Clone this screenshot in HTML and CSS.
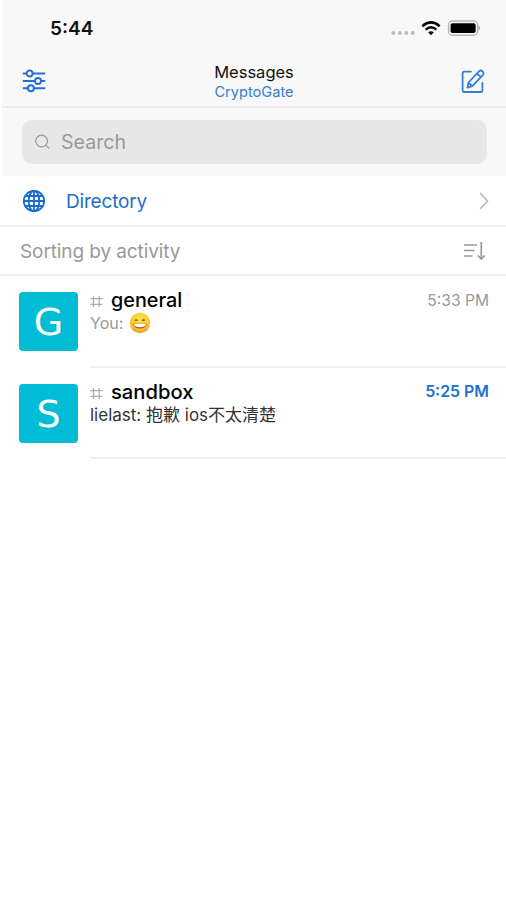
FILE: index.html
```html
<!DOCTYPE html>
<html lang="en">
<head>
<meta charset="utf-8">
<title>Messages</title>
<link rel="stylesheet" href="styles.css">
</head>
<body>
<header class="top">
  <div class="status">
    <span class="clock">5:44</span>
    <svg class="signal" width="92" height="18" viewBox="0 0 92 18">
      <g fill="#bdbdbd"><circle cx="5.3" cy="13" r="2"/><circle cx="11.8" cy="13" r="2"/><circle cx="18.3" cy="13" r="2"/><circle cx="24.8" cy="13" r="2"/></g>
      <g fill="none" stroke="#050505" stroke-width="2.5"><path d="M34.3 6.2Q43 -1.5 51.7 6.2"/><path d="M37.6 9.6Q43 5 48.4 9.6"/></g>
      <path d="M40.2 12.3Q43 10 45.8 12.3L43 15.2Z" fill="#050505"/>
      <rect x="60.6" y="1" width="29" height="14.2" rx="4" fill="#f8f8f8" stroke="#b5b5b5" stroke-width="1.4"/>
      <rect x="62.6" y="3.2" width="25" height="9.8" rx="1.8" fill="#000"/>
      <path d="M90.7 5.5Q92.6 8 90.7 10.7Z" fill="#777"/>
    </svg>
  </div>
  <nav class="nav">
    <svg class="icon" width="24" height="24" viewBox="0 0 24 24" fill="none" stroke="#236fd6" stroke-width="1.9">
      <path d="M.8 4.5H4.3M10.9 4.5H23.2M.8 12H12.7M19.3 12H23.2M.8 19.3H5.6M12.2 19.3H23.2"/>
      <circle cx="7.6" cy="4.5" r="3"/><circle cx="16" cy="12" r="3"/><circle cx="8.9" cy="19.3" r="3"/>
    </svg>
    <div class="heading"><span class="title">Messages</span><span class="server">CryptoGate</span></div>
    <svg class="icon" width="24" height="24" viewBox="0 0 24 24" fill="none" stroke="#367fd8" stroke-width="1.8" stroke-linejoin="round" stroke-linecap="round">
      <path d="M10 2.6H3.2Q1.6 2.6 1.6 4.2V21.4Q1.6 23 3.2 23H19.8Q21.4 23 21.4 21.4V14"/>
      <path d="M17.6 2.7Q19.5.6 21.5 2.3Q23.5 4.2 21.8 6.1L11.3 17.2L6.5 18.7L7.5 13.5ZM16 4.5L20 8.1M7.8 13.8L11 16.9"/>
    </svg>
  </nav>
</header>
<div class="searchbar"><div class="field">
  <svg width="16" height="16" viewBox="0 0 16 16" fill="none" stroke="#999" stroke-width="1.2"><circle cx="6.6" cy="7" r="5.8"/><path d="M10.7 11.2L14.3 14.4"/></svg>
  <span class="placeholder">Search</span>
</div></div>
<main>
  <div class="row directory">
    <svg width="24" height="24" viewBox="0 0 24 24" fill="none" stroke="#176bd1" stroke-width="1.8"><circle cx="12" cy="12" r="10.2"/><ellipse cx="12" cy="12" rx="5.3" ry="10.2"/><path d="M12 1.8V22.2M3.3 7H20.7M3.3 17H20.7M1.8 12H22.2"/></svg>
    <span class="directory-label">Directory</span>
    <svg class="end" width="12" height="20" viewBox="0 0 12 20" fill="none" stroke="#b7b7b7" stroke-width="1.5"><path d="M2 2L9.6 10L2 18"/></svg>
  </div>
  <div class="row sort">
    <span class="sort-label">Sorting by activity</span>
    <svg class="end" width="24" height="22" viewBox="0 0 24 22" fill="none" stroke="#999" stroke-width="1.7"><path d="M1 5H14M1 10.5H11.5M1 16H9.5M18.3 2V19M14.8 15.5L18.3 19L21.8 15.5"/></svg>
  </div>
  <article class="room">
    <div class="avatar">G</div>
    <div class="body">
      <div class="line"><svg class="hash" width="13" height="13" viewBox="0 0 13 13" fill="none" stroke="#aaa" stroke-width="1.2"><path d="M3.5 1V12M9.2 1V12M.5 3.7H12.5M.5 9.3H12.5"/></svg><span class="name general">general</span><time>5:33 PM</time></div>
      <div class="message muted"><span class="you">You:</span>
        <svg class="emoji" width="22" height="22" viewBox="0 0 22 22"><defs><radialGradient id="face" cx=".5" cy=".35" r=".65"><stop offset="0" stop-color="#ffe348"/><stop offset=".7" stop-color="#fbc52e"/><stop offset="1" stop-color="#e79a22"/></radialGradient></defs><circle cx="11" cy="11" r="10.2" fill="url(#face)"/><path d="M6 8.7Q7.2 7 8.4 8.7M13.2 8.7Q14.4 7 15.6 8.7" fill="none" stroke="#77430c" stroke-width="1.4"/><path d="M4.2 11.8H17.8Q17.2 16.6 11 16.6T4.2 11.8Z" fill="#a55c1b"/><path d="M4.8 12H17.2Q16.5 15.2 11 15.2T4.8 12Z" fill="#fff"/></svg>
      </div>
    </div>
  </article>
  <article class="room">
    <div class="avatar">S</div>
    <div class="body">
      <div class="line"><svg class="hash" width="13" height="13" viewBox="0 0 13 13" fill="none" stroke="#aaa" stroke-width="1.2"><path d="M3.5 1V12M9.2 1V12M.5 3.7H12.5M.5 9.3H12.5"/></svg><span class="name sandbox">sandbox</span><time class="unread">5:25 PM</time></div>
      <div class="message preview">lielast: 抱歉 ios不太清楚</div>
    </div>
  </article>
</main>
</body>
</html>
```
FILE: styles.css
```css
* { box-sizing: border-box; }
body { margin: 0; width: 506px; height: 900px; overflow: hidden; background: #fff; font-family: Inter, "Noto Sans CJK SC", sans-serif; color: #111; }
svg { display: block; flex: none; }
.top { height: 108px; margin-left: 2px; background: #f8f8f8; border-bottom: 2px solid #ededed; }
.status { height: 56px; display: flex; justify-content: space-between; padding: 17px 26px 0 48px; }
.clock { font-size: 19px; line-height: 23px; font-weight: 600; }
.signal { margin-top: 2.5px; }
.nav { height: 50px; display: grid; grid-template-columns: 24px 1fr 24px; padding: 0 21px 0 20px; align-items: center; }
.heading { display: flex; flex-direction: column; align-items: center; padding: 2px 0 0 1px; }
.title { font-size: 16.5px; line-height: 20px; }
.server { font-size: 14.6px; line-height: 20px; color: #367fd0; }
.searchbar { height: 68px; margin-left: 2px; padding: 12px 19px 12px 20px; background: #f8f8f8; }
.field { height: 44px; border-radius: 10px; background: #e7e7e7; display: flex; align-items: center; padding-left: 13px; gap: 10px; }
.placeholder { font-size: 19.6px; color: #999; }
.row { display: flex; align-items: center; }
.end { margin-left: auto; }
.directory { height: 51px; padding: 0 16px 0 22px; border-bottom: 2px solid #f0f0f0; }
.directory-label { margin: 1px 0 0 20px; font-size: 19px; letter-spacing: -.18px; color: #206dcc; }
.sort { height: 49px; padding: 0 19px 0 20px; border-bottom: 2px solid #f0f0f0; }
.sort-label { margin-top: 1px; font-size: 19px; letter-spacing: -.1px; color: #999; }
.room { height: 91.5px; display: flex; padding-left: 19px; gap: 12px; }
.avatar { width: 59px; height: 59px; margin-top: 16px; border-radius: 4px; background: #00bcd4; color: #fff; font: 38px/61px "DejaVu Sans", sans-serif; text-align: center; }
.body { flex: 1; border-bottom: 2px solid #f0f0f0; padding: 12.4px 17px 0 0; }
.line { display: flex; align-items: center; height: 24px; }
.hash { margin: 3px 8px 0 0; }
.name { font-size: 19.8px; font-weight: 500; color: #000; }
.sandbox { font-size: 20.2px; }
time { margin-left: auto; font-size: 15.6px; color: #999; }
.unread { font-size: 15.9px; font-weight: 600; color: #236fcc; }
.message { height: 22px; font-size: 16px; line-height: 22px; color: #333; white-space: nowrap; }
.preview { font-size: 17px; }
.muted { display: flex; color: #999; }
.emoji { margin-left: 6px; }
```
